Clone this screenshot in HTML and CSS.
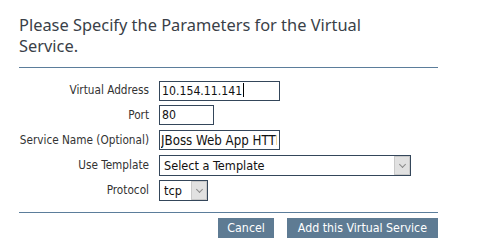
FILE: index.html
```html
<!DOCTYPE html>
<html>
<head>
<meta charset="utf-8">
<link rel="stylesheet" href="styles.css">
</head>
<body>
<div class="panel">
  <h1 class="title">Please Specify the Parameters for the Virtual Service.</h1>
  <div class="rule"></div>
  <form class="form">
    <div class="row">
      <label class="label">Virtual Address</label>
      <span class="field"><input class="text wide" type="text" value="10.154.11.141"><span class="caret"></span></span>
    </div>
    <div class="row">
      <label class="label">Port</label>
      <input class="text narrow" type="text" value="80">
    </div>
    <div class="row">
      <label class="label">Service Name (Optional)</label>
      <input class="text wide name" type="text" value="JBoss Web App HTTP">
    </div>
    <div class="row">
      <label class="label">Use Template</label>
      <span class="select template"><select><option>Select a Template</option></select><span class="arrow"></span></span>
    </div>
    <div class="row">
      <label class="label">Protocol</label>
      <span class="select proto"><select><option>tcp</option></select><span class="arrow"></span></span>
    </div>
  </form>
  <div class="rule rule2"></div>
  <div class="actions">
    <button class="btn cancel" type="button">Cancel</button>
    <button class="btn" type="button">Add this Virtual Service</button>
  </div>
</div>
</body>
</html>
```

FILE: styles.css
```css
html, body {
  margin: 0;
  padding: 0;
  background: #ffffff;
}
.panel {
  width: 419px;
  padding: 0 0 0 19px;
  font-family: "DejaVu Sans Condensed", "DejaVu Sans", sans-serif;
  color: #333333;
}
.title {
  margin: 0;
  padding-top: 14px;
  width: 385px;
  font-family: "Noto Sans", "Open Sans", sans-serif;
  font-weight: normal;
  font-size: 16.4px;
  line-height: 21px;
  color: #3a3f48;
}
.rule {
  height: 1px;
  background: #5b7d9b;
  margin-top: 11px;
}
.form {
  display: flex;
  flex-direction: column;
  gap: 5px;
  margin: 12px 0 0 0;
}
.row {
  display: flex;
  align-items: center;
  height: 20px;
}
.label {
  width: 130px;
  margin-right: 10px;
  text-align: right;
  font-size: 11.7px;
  color: #333333;
  white-space: nowrap;
}
.field {
  position: relative;
  display: block;
  height: 20px;
}
.text {
  box-sizing: border-box;
  height: 20px;
  margin: 0;
  padding: 0 2px;
  border: 1px solid #34465a;
  border-radius: 0;
  font-family: "DejaVu Sans Condensed", "DejaVu Sans", sans-serif;
  font-size: 12.2px;
  color: #111111;
  background: #ffffff;
  outline: none;
}
.wide { width: 121px; }
.narrow { width: 55px; }
.name { font-size: 13.2px; padding-left: 1px; }
.caret {
  position: absolute;
  left: 84px;
  top: 3px;
  width: 1px;
  height: 14px;
  background: #000000;
}
.select {
  position: relative;
  display: block;
  height: 21px;
}
.select select {
  -webkit-appearance: none;
  appearance: none;
  box-sizing: border-box;
  height: 21px;
  margin: 0;
  padding: 0 0 0 4px;
  border: 1px solid #34465a;
  border-radius: 0;
  background: #ffffff;
  font-family: "DejaVu Sans Condensed", "DejaVu Sans", sans-serif;
  font-size: 12.6px;
  color: #111111;
  outline: none;
}
.template select { width: 252px; }
.proto select { width: 49px; }
.arrow {
  position: absolute;
  right: 1px;
  top: 1px;
  width: 16px;
  height: 19px;
  box-sizing: border-box;
  background: #e1e1e1;
  border: 1px solid #c9c9c9;
  pointer-events: none;
}
.arrow::after {
  content: "";
  position: absolute;
  left: 5px;
  top: 5px;
  width: 4px;
  height: 4px;
  border-right: 1px solid #8a8a8a;
  border-bottom: 1px solid #8a8a8a;
  transform: rotate(45deg);
}
.rule2 { margin-top: 12px; }
.actions {
  display: flex;
  justify-content: flex-end;
  gap: 13px;
  margin-top: 5px;
}
.btn {
  height: 20px;
  margin: 0;
  padding: 0 11px;
  border: none;
  border-radius: 0;
  background: #5e7b93;
  color: #ffffff;
  font-family: "DejaVu Sans Condensed", "DejaVu Sans", sans-serif;
  font-size: 12.3px;
}
.cancel { padding: 0 9px; }
```
